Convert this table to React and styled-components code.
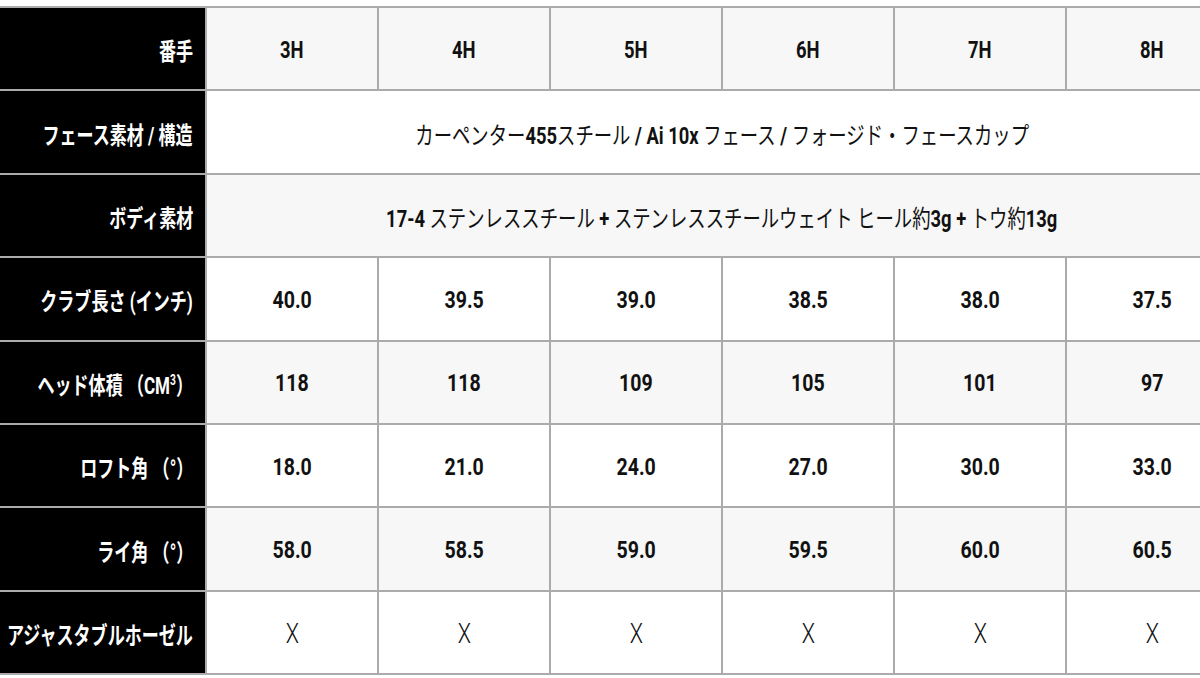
import React from "react";
import styled, { createGlobalStyle } from "styled-components";

const Global = createGlobalStyle`
  html, body { margin: 0; padding: 0; background: #fff; overflow: hidden; }
  body { font-family: Roboto, "Noto Sans CJK JP", sans-serif; }
`;

const Page = styled.div`
  width: 1200px;
  height: 678px;
  overflow: hidden;
  padding-top: 6px;
  box-sizing: border-box;
`;

const Grid = styled.div`
  display: grid;
  width: 1237px;
  grid-template-columns: 205px repeat(6, 170px);
  grid-template-rows: repeat(8, 81.4px);
  gap: 2px;
  padding: 2px 0;
  background: #ababab;
`;

const Label = styled.div`
  background: #000;
  color: #fff;
  display: flex;
  align-items: center;
  justify-content: flex-end;
  padding-right: 12px;
  padding-top: 2px;
  font-weight: 700;
  font-size: 24px;
`;

const Cell = styled.div`
  background: ${(p) => (p.$alt ? "#f7f7f7" : "#ffffff")};
  color: #111;
  display: flex;
  align-items: center;
  justify-content: center;
  padding-top: 3px;
  font-size: ${(p) => (p.$thin ? 27 : p.$span ? 24 : 23)}px;
  font-weight: ${(p) => (p.$thin ? 300 : 700)};
  grid-column: ${(p) => (p.$span ? `span ${p.$span}` : "auto")};
`;

const Squeeze = styled.span`
  display: inline-block;
  white-space: nowrap;
  transform: scaleX(${(p) => p.$k || 0.85});
  transform-origin: ${(p) => (p.$right ? "right center" : "center")};
`;

const Jp = styled.span`
  font-weight: ${(p) => p.$w || 400};
`;

const Sup = styled.sup`
  font-size: 0.6em;
  vertical-align: 0.6em;
  line-height: 0;
`;

const clubs = ["3H", "4H", "5H", "6H", "7H", "8H"];
const rows = [
  { label: "クラブ長さ (インチ)", values: ["40.0", "39.5", "39.0", "38.5", "38.0", "37.5"] },
  { label: <>ヘッド体積 （CM<Sup>3</Sup>）</>, values: ["118", "118", "109", "105", "101", "97"] },
  { label: "ロフト角 （°）", values: ["18.0", "21.0", "24.0", "27.0", "30.0", "33.0"] },
  { label: "ライ角 （°）", values: ["58.0", "58.5", "59.0", "59.5", "60.0", "60.5"] },
];

const LK = 0.71;

export default function App() {
  return (
    <Page>
      <Global />
      <Grid>
        <Label><Squeeze $right $k={LK}>番手</Squeeze></Label>
        {clubs.map((c) => (
          <Cell key={c} $alt><Squeeze $k={0.8}>{c}</Squeeze></Cell>
        ))}

        <Label><Squeeze $right $k={LK}>フェース素材 / 構造</Squeeze></Label>
        <Cell $span={6}>
          <Squeeze $k={0.765}>
            <Jp>カーペンター</Jp>455<Jp>スチール</Jp> / Ai 10x <Jp>フェース</Jp> / <Jp>フォージド・フェースカップ</Jp>
          </Squeeze>
        </Cell>

        <Label><Squeeze $right $k={LK}>ボディ素材</Squeeze></Label>
        <Cell $span={6} $alt>
          <Squeeze $k={0.765}>
            17-4 <Jp>ステンレススチール</Jp> + <Jp>ステンレススチールウェイト ヒール約</Jp>3g + <Jp>トウ約</Jp>13g
          </Squeeze>
        </Cell>

        {rows.map((r, i) => (
          <React.Fragment key={i}>
            <Label><Squeeze $right $k={LK}>{r.label}</Squeeze></Label>
            {r.values.map((v, j) => (
              <Cell key={j} $alt={i % 2 === 1}><Squeeze $k={0.85}>{v}</Squeeze></Cell>
            ))}
          </React.Fragment>
        ))}

        <Label><Squeeze $right $k={LK}>アジャスタブルホーゼル</Squeeze></Label>
        {clubs.map((c) => (
          <Cell key={c} $thin><Squeeze $k={0.8}>X</Squeeze></Cell>
        ))}
      </Grid>
    </Page>
  );
}
